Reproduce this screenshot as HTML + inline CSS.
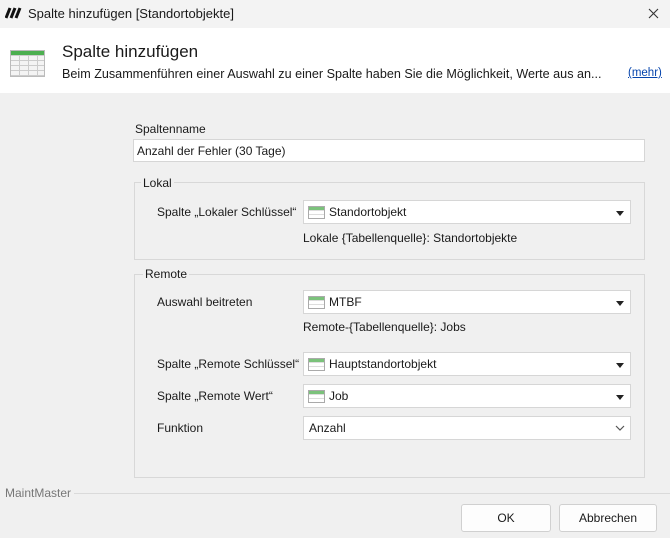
<!DOCTYPE html>
<html><head><meta charset="utf-8"><style>
*{box-sizing:border-box;margin:0;padding:0}
body{width:670px;height:538px;background:#f0f0f0;font-family:"Liberation Sans",sans-serif;font-size:12px;color:#1a1a1a;position:relative;overflow:hidden}
.a{position:absolute;white-space:nowrap}
.combo{position:absolute;background:#fff;border:1px solid #d6d6d6;height:24px}
.combo span{position:absolute;left:25px;top:4px}
.ic{position:absolute;left:4px;top:5px;width:17px;height:13px;border:1px solid #aaa;background:repeating-linear-gradient(#fff 0 3px,#ddd 3px 4px)}
.ic:before{content:"";position:absolute;left:0;right:0;top:0;height:3px;background:#7bc27b}
.arr{position:absolute;right:6px;top:10px;border-left:4px solid transparent;border-right:4px solid transparent;border-top:5px solid #222}
.gb{position:absolute;border:1px solid #d8d8d8}
.lg{position:absolute;background:#f0f0f0;padding:0 2px}
.btn{position:absolute;background:#fdfdfd;border:1px solid #d0d0d0;border-radius:3px;text-align:center;line-height:26px;height:28px}
</style></head><body>
<div class="a" style="left:0;top:0;width:670px;height:28px;background:#f3f3f3"></div>
<svg class="a" style="left:5px;top:7px" width="18" height="12"><path d="M1 11L5 1M6 11L10 1M11 11L15 1" stroke="#111" stroke-width="3"/></svg>
<div class="a" style="left:28px;top:6px;font-size:13px">Spalte hinzufügen [Standortobjekte]</div>
<svg class="a" style="left:648px;top:8px" width="11" height="11"><path d="M1 1L10 10M10 1L1 10" stroke="#333" stroke-width="1.1"/></svg>
<div class="a" style="left:0;top:28px;width:670px;height:65px;background:#fff"></div>
<div class="a" style="left:10px;top:50px;width:35px;height:27px;border:1px solid #bbb;background:repeating-linear-gradient(90deg,transparent 0 8px,#ccc 8px 9px),repeating-linear-gradient(#f4f4f4 0 4px,#ccc 4px 5px)"><div style="height:4px;background:#4caf50"></div></div>
<div class="a" style="left:62px;top:42px;font-size:17px">Spalte hinzufügen</div>
<div class="a" style="left:62px;top:67px;font-size:12.6px">Beim Zusammenführen einer Auswahl zu einer Spalte haben Sie die Möglichkeit, Werte aus an...</div>
<div class="a" style="left:628px;top:67px;font-size:11.5px;color:#0645ad;text-decoration:underline">(mehr)</div>
<div class="a" style="left:135px;top:122px">Spaltenname</div>
<div class="combo" style="left:133px;top:139px;width:512px;height:23px"><span style="left:3px;top:4px">Anzahl der Fehler (30 Tage)</span></div>
<div class="gb" style="left:134px;top:182px;width:511px;height:78px"></div>
<div class="lg" style="left:141px;top:176px">Lokal</div>
<div class="a" style="left:157px;top:205px">Spalte „Lokaler Schlüssel“</div>
<div class="combo" style="left:303px;top:200px;width:328px"><div class="ic"></div><span>Standortobjekt</span><div class="arr"></div></div>
<div class="a" style="left:303px;top:231px">Lokale {Tabellenquelle}: Standortobjekte</div>
<div class="gb" style="left:134px;top:274px;width:511px;height:204px"></div>
<div class="lg" style="left:143px;top:267px">Remote</div>
<div class="a" style="left:157px;top:295px">Auswahl beitreten</div>
<div class="combo" style="left:303px;top:290px;width:328px"><div class="ic"></div><span>MTBF</span><div class="arr"></div></div>
<div class="a" style="left:303px;top:320px">Remote-{Tabellenquelle}: Jobs</div>
<div class="a" style="left:157px;top:357px">Spalte „Remote Schlüssel“</div>
<div class="combo" style="left:303px;top:352px;width:328px"><div class="ic"></div><span>Hauptstandortobjekt</span><div class="arr"></div></div>
<div class="a" style="left:157px;top:389px">Spalte „Remote Wert“</div>
<div class="combo" style="left:303px;top:384px;width:328px"><div class="ic"></div><span>Job</span><div class="arr"></div></div>
<div class="a" style="left:157px;top:421px">Funktion</div>
<div class="combo" style="left:303px;top:416px;width:328px"><span style="left:5px">Anzahl</span><svg style="position:absolute;right:5px;top:8px" width="10" height="6"><path d="M1 1L5 5L9 1" fill="none" stroke="#555" stroke-width="1.2"/></svg></div>
<div class="a" style="left:5px;top:486px;color:#777">MaintMaster</div>
<div class="a" style="left:74px;top:493px;width:596px;height:1px;background:#dadada"></div>
<div class="btn" style="left:461px;top:504px;width:90px">OK</div>
<div class="btn" style="left:559px;top:504px;width:98px">Abbrechen</div>
</body></html>
